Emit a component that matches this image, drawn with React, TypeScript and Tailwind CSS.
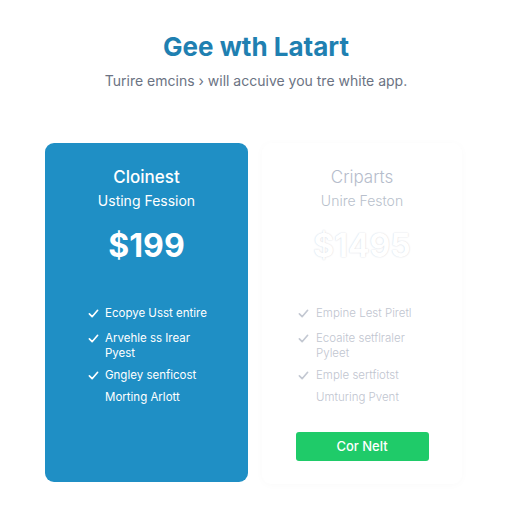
import React from 'react';

interface Plan {
  name: string;
  subtitle: string;
  price: string;
  features: string[][];
  highlighted: boolean;
  cta?: string;
}

const plans: Plan[] = [
  {
    name: 'Cloinest',
    subtitle: 'Usting Fession',
    price: '$199',
    features: [['Ecopye Usst entire'], ['Arvehle ss Irear', 'Pyest'], ['Gngley senficost'], ['Morting Arlott']],
    highlighted: true,
  },
  {
    name: 'Criparts',
    subtitle: 'Unire Feston',
    price: '$1495',
    features: [['Empine Lest Piretl'], ['Ecoaite setflraler', 'Pyleet'], ['Emple sertfiotst'], ['Umturing Pvent']],
    highlighted: false,
    cta: 'Cor Nelt',
  },
];

const Check: React.FC<{ className?: string }> = ({ className }) => (
  <svg viewBox="0 0 12 12" className={className} fill="none" stroke="currentColor" strokeWidth="1.8" strokeLinecap="round" strokeLinejoin="round">
    <path d="M1.5 6.5 4.5 9.5 10.5 2.5" />
  </svg>
);

const PlanCard: React.FC<{ plan: Plan }> = ({ plan }) => {
  const hl = plan.highlighted;
  return (
    <div
      className={
        hl
          ? 'w-[203px] h-[339px] rounded-[9px] bg-[#1f8fc5] text-white flex flex-col items-center pt-[22px]'
          : 'w-[200px] h-[341px] rounded-[9px] bg-white shadow-[0_1px_8px_rgba(0,0,0,0.025)] flex flex-col items-center pt-[22px]'
      }
    >
      <div className={hl ? 'text-[17px] leading-[24px] font-medium' : 'text-[17px] leading-[24px] font-light text-[#b5bccb]'}>
        {plan.name}
      </div>
      <div className={hl ? 'mt-[2px] text-[14px] leading-[20px]' : 'mt-[2px] text-[14px] leading-[20px] font-light text-[#b8bfcc]'}>
        {plan.subtitle}
      </div>
      <div
        className={
          hl
            ? 'mt-[15px] text-[32px] leading-[40px] font-bold'
            : 'mt-[15px] text-[32px] leading-[40px] font-bold text-white [text-shadow:0_0_1.5px_#c9ced8]'
        }
      >
        {plan.price}
      </div>

      <ul className={hl ? 'self-start ml-[43px] mt-[40px] text-[11.5px] leading-[16px]' : 'self-start ml-[36px] mt-[40px] text-[11.5px] leading-[16px] font-light text-[#bfc5d0]'}>
        {plan.features.map((lines, i) => (
          <li key={i} className={i === 1 ? 'flex mt-[10px]' : i === 0 ? 'flex' : i === 2 ? 'flex mt-[7px]' : 'flex mt-[7px]'}>
            <span className={hl ? 'w-[17px] pt-[2px]' : 'w-[18px] pt-[2px]'}>
              {i < 3 && <Check className={hl ? 'w-[11px] h-[11px]' : 'w-[11px] h-[11px] text-[#c3c8d2]'} />}
            </span>
            <span className="flex flex-col leading-[15px]">
              {lines.map((l) => (
                <span key={l}>{l}</span>
              ))}
            </span>
          </li>
        ))}
      </ul>

      {plan.cta && (
        <button className="mt-[27px] w-[133px] h-[29px] rounded-[3px] bg-[#1fcb69] text-white text-[13px] font-medium">
          {plan.cta}
        </button>
      )}
    </div>
  );
};

export default function App() {
  return (
    <div className="w-[512px] h-[512px] bg-white font-['Inter','Liberation_Sans',sans-serif] overflow-hidden">
      <div className="pt-[31px] text-center">
        <h1 className="text-[26px] leading-[32px] font-bold text-[#1f80b1]">Gee wth Latart</h1>
        <p className="mt-[9px] text-[14px] leading-[18px] text-[#6b7383]">Turire emcins › will accuive you tre white app.</p>
      </div>
      <div className="mt-[53px] pl-[45px] flex gap-[14px] items-start">
        {plans.map((p) => (
          <PlanCard key={p.name} plan={p} />
        ))}
      </div>
    </div>
  );
}
